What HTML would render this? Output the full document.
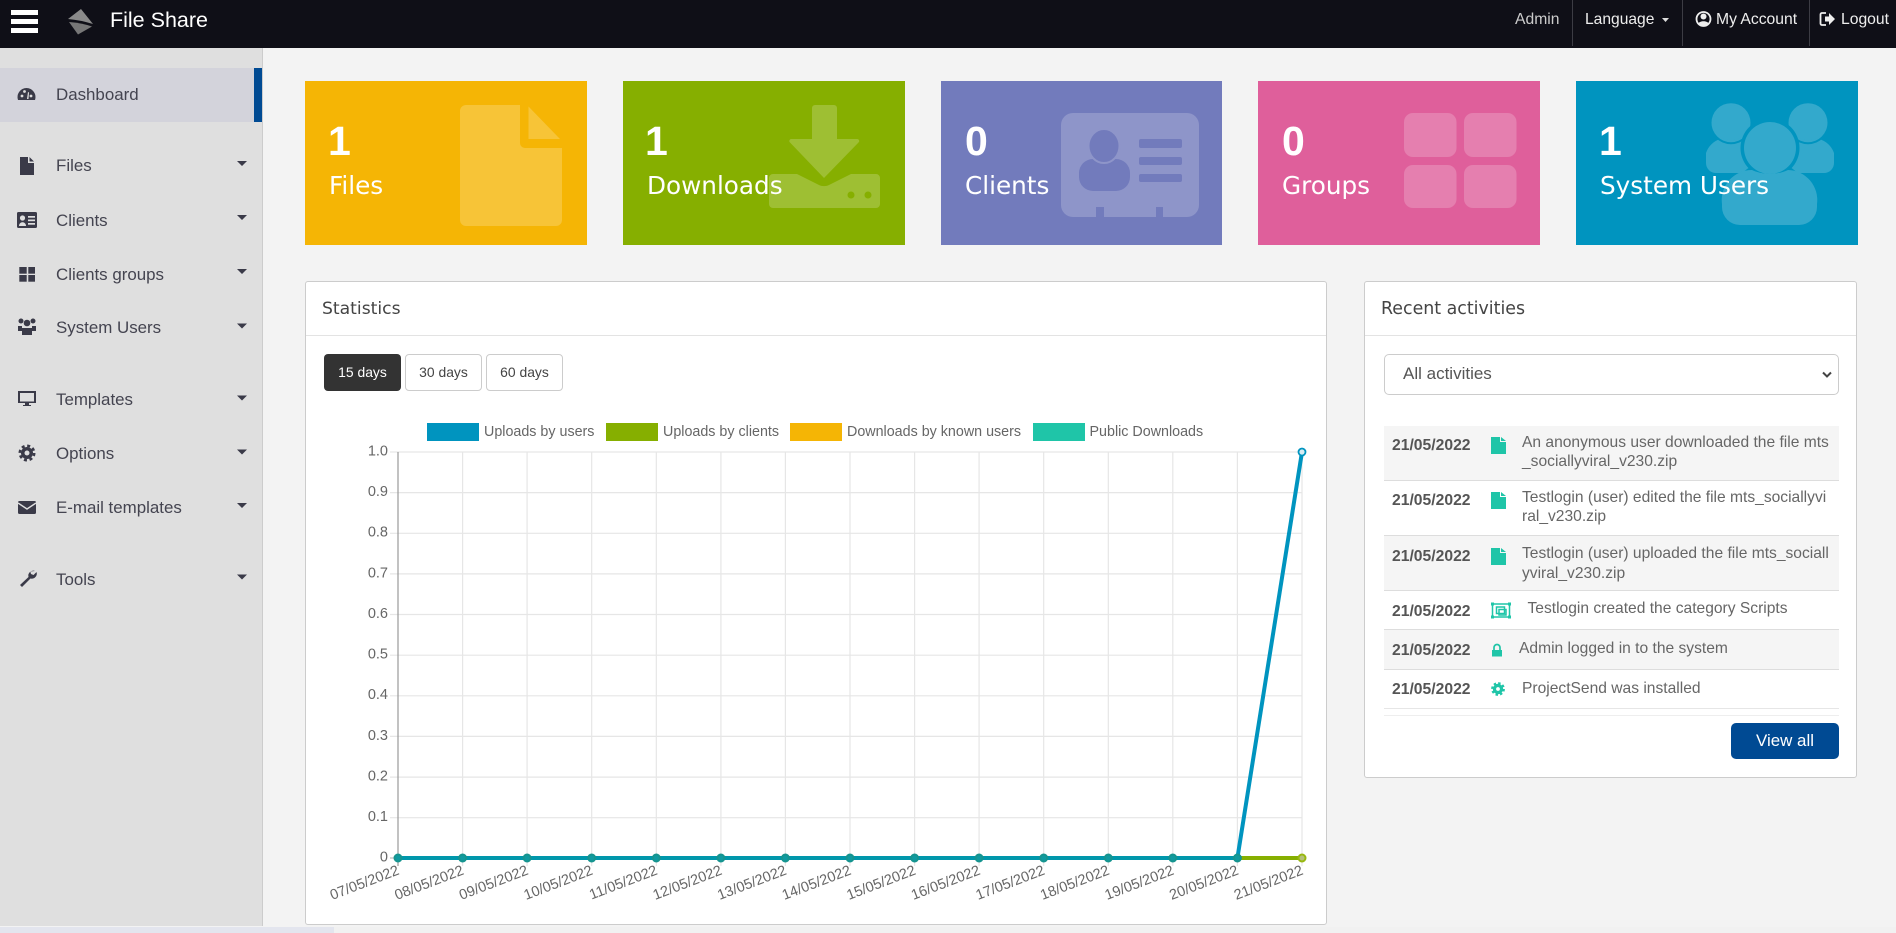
<!DOCTYPE html>
<html><head><meta charset="utf-8"><title>File Share</title>
<style>
html,body{margin:0;padding:0;width:1896px;height:933px;overflow:hidden;background:#f3f3f3;font-family:"Liberation Sans",sans-serif;position:relative}
.b{position:absolute;box-sizing:border-box}
.t{position:absolute;white-space:nowrap;line-height:20px}
.s{font-size:16.9px;color:#444450}
.o{font-family:"DejaVu Sans",sans-serif;color:#fff}
.n{font-family:"Liberation Sans",sans-serif;font-size:41px;font-weight:bold;line-height:44px;left:0}
.l{font-size:24.7px;line-height:30px}
.d{font-size:15.7px;font-weight:bold;color:#555}
.a{font-size:15.6px;color:#666;line-height:20px}
.w{font-size:13.9px;color:#fff;text-align:center}
svg{position:absolute;left:0;top:0}
</style></head><body>
<div class="b" style="left:0;top:0;width:1896px;height:48px;background:#0f0f17"></div>
<div class="b" style="left:0;top:48px;width:263px;height:878px;background:#dfdfdf;border-right:1px solid #ccc"></div>
<div class="b" style="left:0;top:68px;width:254px;height:54px;background:#d3d3db"></div>
<div class="b" style="left:254px;top:68px;width:8px;height:54px;background:#004a93"></div>
<div class="b" style="left:0;top:927px;width:1896px;height:6px;background:#f1f1f1"></div>
<div class="b" style="left:0;top:927px;width:334px;height:6px;background:#e3e5ee"></div>

<div class="b" style="left:305px;top:81px;width:282px;height:164px;background:#f5b505"></div>
<div class="b" style="left:623px;top:81px;width:282px;height:164px;background:#86af00"></div>
<div class="b" style="left:941px;top:81px;width:281px;height:164px;background:#727bbc"></div>
<div class="b" style="left:1258px;top:81px;width:282px;height:164px;background:#df5f9b"></div>
<div class="b" style="left:1576px;top:81px;width:282px;height:164px;background:#0094bf"></div>

<div class="b" style="left:305px;top:281px;width:1022px;height:644px;background:#fff;border:1px solid #ccc;border-radius:3px"></div>
<div class="b" style="left:306px;top:335px;width:1020px;height:1px;background:#e3e3e3"></div>
<div class="b" style="left:1364px;top:281px;width:493px;height:497px;background:#fff;border:1px solid #ccc;border-radius:3px"></div>
<div class="b" style="left:1365px;top:335px;width:491px;height:1px;background:#e3e3e3"></div>

<div class="b" style="left:324px;top:354px;width:77px;height:37px;background:#333;border-radius:4px"></div>
<div class="b" style="left:405px;top:354px;width:77px;height:37px;background:#fff;border:1px solid #ccc;border-radius:4px"></div>
<div class="b" style="left:486px;top:354px;width:77px;height:37px;background:#fff;border:1px solid #ccc;border-radius:4px"></div>

<div class="b" style="left:1384px;top:354px;width:455px;height:41px;background:#fff;border:1px solid #ccc;border-radius:5px"></div>

<div class="b" style="left:1384px;top:426px;width:455px;height:55px;background:#f5f5f5;border-bottom:1px solid #ddd"></div>
<div class="b" style="left:1384px;top:481px;width:455px;height:55px;background:#fff;border-bottom:1px solid #ddd"></div>
<div class="b" style="left:1384px;top:536px;width:455px;height:55px;background:#f5f5f5;border-bottom:1px solid #ddd"></div>
<div class="b" style="left:1384px;top:591px;width:455px;height:39px;background:#fff;border-bottom:1px solid #ddd"></div>
<div class="b" style="left:1384px;top:630px;width:455px;height:40px;background:#f5f5f5;border-bottom:1px solid #ddd"></div>
<div class="b" style="left:1384px;top:670px;width:455px;height:39px;background:#fff;border-bottom:1px solid #e6e6e6"></div>
<div class="b" style="left:1384px;top:715px;width:455px;height:1px;background:#eee"></div>
<div class="b" style="left:1731px;top:723px;width:108px;height:36px;background:#004a93;border-radius:5px"></div>

<svg width="1896" height="933" viewBox="0 0 1896 933" xmlns="http://www.w3.org/2000/svg">
<!-- hamburger -->
<rect x="11" y="10" width="27" height="5" fill="#fff"/><rect x="11" y="19" width="27" height="5" fill="#fff"/><rect x="11" y="28" width="27" height="5" fill="#fff"/>
<!-- logo -->
<path d="M81 9L93 24Q80 20 68 19Z" fill="#8a8a8a"/><path d="M69 22Q82 23 92 26.500L78 34.500Z" fill="#777"/>
<!-- top right icons -->
<path d="M1663 18h7l-3.500 4z" fill="#ddd" transform="translate(-1 0)"/>
<rect x="1572" y="0" width="1" height="46" fill="#3c3c44"/><rect x="1682" y="0" width="1" height="46" fill="#3c3c44"/><rect x="1809" y="0" width="1" height="46" fill="#3c3c44"/>
<circle cx="1703.500" cy="19" r="7" fill="none" stroke="#eee" stroke-width="1.800"/><circle cx="1703.500" cy="16.500" r="3" fill="#eee"/><path d="M1698.500 23.500c1-3 9-3 10 0l-2 2h-6z" fill="#eee"/>
<path d="M1826 13h-4a1.500 1.500 0 0 0-1.500 1.500v9a1.500 1.500 0 0 0 1.500 1.500h4" fill="none" stroke="#eee" stroke-width="1.800"/><path d="M1825 16.500h4v-3.500l6 6-6 6v-3.500h-4z" fill="#eee"/>
<!-- sidebar icons -->
<g fill="#3a3a48">
<path d="M18 100a9 9 0 1 1 17 0z"/>
<path d="M20 157h8v6h6v12H20zM29.500 157l4.500 4.500h-4.500z"/>
<rect x="17" y="212" width="20" height="16" rx="1.500"/>
<rect x="19.300" y="267" width="7.400" height="6.700"/><rect x="28.300" y="267" width="6.700" height="6.700"/><rect x="19.300" y="275" width="7.400" height="6.700"/><rect x="28.300" y="275" width="6.700" height="6.700"/>
<circle cx="21" cy="321" r="2.500"/><circle cx="33" cy="321" r="2.500"/><circle cx="27" cy="323" r="3.300"/><path d="M18 326h4v5h-4zM32 326h4v5h-4zM22 328h10v7H22z"/>
<path d="M18 391h18v12h-7v2h2v1H23v-1h2v-2h-7z"/>
<circle cx="27" cy="453" r="6"/><circle cx="27" cy="453" r="7.200" fill="none" stroke="#3a3a48" stroke-width="2.600" stroke-dasharray="3 2.650"/>
<rect x="18" y="501" width="18" height="13" rx="1.500"/>
<path d="M35 571a5 5 0 0 0-6.500 6l-8.500 8 2 2 8.500-8.500a5 5 0 0 0 6-6.500l-3 3-2.500-1-.7-2.500z"/>
</g>
<g fill="#dfdfdf">
<circle cx="22" cy="96" r="1.400"/><circle cx="24.500" cy="91.500" r="1.400"/><circle cx="31" cy="96" r="1.400"/><path d="M27 99l1-7 1 .5-.5 6.500z"/>
<circle cx="22.500" cy="218" r="2.600"/><path d="M19 226c0-5 7-5 7 0z"/><rect x="28" y="216" width="7" height="1.700"/><rect x="28" y="219.500" width="7" height="1.700"/><rect x="28" y="223" width="7" height="1.700"/>
<rect x="20" y="393" width="14" height="8.500"/>
<circle cx="27" cy="453" r="2.500"/>
</g>
<path d="M18 503l9 6 9-6" fill="none" stroke="#dfdfdf" stroke-width="1.400"/>
<g fill="#3a3a48">
<path d="M237 161h10l-5 5zM237 215h10l-5 5zM237 269h10l-5 5zM237 323.500h10l-5 5zM237 395.500h10l-5 5zM237 449.500h10l-5 5zM237 503h10l-5 5zM237 574.500h10l-5 5z"/>
</g>

<!-- card glyphs -->
<path d="M466 105h54v38a5 5 0 0 0 5 5h37v72a6 6 0 0 1-6 6H466a6 6 0 0 1-6-6V111a6 6 0 0 1 6-6z" fill="#f7c437"/>
<path d="M528.500 106.500L560 139h-31.500z" fill="#f7c437"/>
<path d="M815 105h19a3 3 0 0 1 3 3v31h20a2 2 0 0 1 1.500 3.500L824 178l-34-35.500a2 2 0 0 1 1.500-3.500H812v-31a3 3 0 0 1 3-3z" fill="#9ebf33"/>
<path d="M773 174h24l22 11c3 1.500 7 1.500 10 0l22-11h25a4 4 0 0 1 4 4v26a4 4 0 0 1-4 4H773a4 4 0 0 1-4-4v-26a4 4 0 0 1 4-4z" fill="#9ebf33"/>
<circle cx="851" cy="195" r="3.500" fill="#86af00"/><circle cx="868" cy="195" r="3.500" fill="#86af00"/>
<rect x="1061" y="113" width="138" height="104" rx="12" fill="#8e95c9"/>
<g fill="#727bbc"><rect x="1096" y="207" width="8" height="11"/><rect x="1156" y="207" width="7" height="11"/><rect x="1079" y="159" width="51" height="32" rx="14"/><ellipse cx="1104" cy="146" rx="15.500" ry="17" stroke="#8e95c9" stroke-width="2"/><rect x="1139" y="139" width="43" height="9" rx="2"/><rect x="1139" y="157" width="43" height="8" rx="2"/><rect x="1139" y="174" width="43" height="8" rx="2"/></g>
<g fill="#e57faf"><rect x="1404" y="113" width="52.500" height="44" rx="9"/><rect x="1464" y="113" width="52.500" height="44" rx="9"/><rect x="1404" y="165" width="52.500" height="43" rx="9"/><rect x="1464" y="165" width="52.500" height="43" rx="9"/></g>
<g fill="#33a9cc">
<path d="M1720 139h30v34h-34a10 10 0 0 1-10-10v-10a22 22 0 0 1 14-14zM1790 139h29a22 22 0 0 1 15 14v10a10 10 0 0 1-10 10h-34z"/>
<circle cx="1731" cy="122.700" r="19.500" stroke="#0094bf" stroke-width="4" paint-order="stroke"/><circle cx="1808" cy="122.700" r="19.500" stroke="#0094bf" stroke-width="4" paint-order="stroke"/>
</g>
<circle cx="1731" cy="122.700" r="17.500" fill="#33a9cc"/><circle cx="1808" cy="122.700" r="17.500" fill="#33a9cc"/>
<circle cx="1770" cy="148" r="29.500" fill="#0094bf"/><path d="M1735 195a34 34 0 0 1 34-30h3a34 34 0 0 1 33 30z" fill="#0094bf" stroke="#0094bf" stroke-width="6"/>
<g fill="#33a9cc"><circle cx="1770" cy="148" r="26"/><path d="M1752 170c10 5 26 5 36 0a30 30 0 0 1 29 34v3a18 18 0 0 1-18 18h-59a18 18 0 0 1-18-18v-3a30 30 0 0 1 30-34z"/></g>

<!-- chart -->
<g stroke="#e6e6e6" stroke-width="1.200" fill="none">
<path d="M390 452H1302M390 492.600H1302M390 533.300H1302M390 573.900H1302M390 614.500H1302M390 655.200H1302M390 695.800H1302M390 736.400H1302M390 777.100H1302M390 817.700H1302"/>
<path d="M462.600 452V866M527.100 452V866M591.700 452V866M656.300 452V866M720.900 452V866M785.400 452V866M850 452V866M914.600 452V866M979.100 452V866M1043.700 452V866M1108.300 452V866M1172.800 452V866M1237.400 452V866M1302 452V866"/>
<path d="M390 858H398" stroke="#bbb"/>
</g>
<path d="M398 452V866" stroke="#999" stroke-width="1.200"/>
<rect x="427" y="423" width="52" height="18" fill="#0094bf"/><rect x="606" y="423" width="52" height="18" fill="#86af00"/><rect x="790" y="423" width="52" height="18" fill="#f5b505"/><rect x="1033" y="423" width="52" height="18" fill="#1fc5a8"/>
<path d="M1237.400 858L1302 858" stroke="#86af00" stroke-width="4"/>
<path d="M398 858H1237.400" stroke="#0097ab" stroke-width="4"/>
<path d="M1237.400 858L1302 452" stroke="#0094bf" stroke-width="4" fill="none"/>
<g fill="#0f9aa0" stroke="#16948f" stroke-width="2">
<circle cx="398" cy="858" r="3.500"/><circle cx="462.600" cy="858" r="3.500"/><circle cx="527.100" cy="858" r="3.500"/><circle cx="591.700" cy="858" r="3.500"/><circle cx="656.300" cy="858" r="3.500"/><circle cx="720.900" cy="858" r="3.500"/><circle cx="785.400" cy="858" r="3.500"/><circle cx="850" cy="858" r="3.500"/><circle cx="914.600" cy="858" r="3.500"/><circle cx="979.100" cy="858" r="3.500"/><circle cx="1043.700" cy="858" r="3.500"/><circle cx="1108.300" cy="858" r="3.500"/><circle cx="1172.800" cy="858" r="3.500"/><circle cx="1237.400" cy="858" r="3.500"/>
</g>
<circle cx="1302" cy="858" r="3.500" fill="#b5c07c" stroke="#98b810" stroke-width="2"/>
<circle cx="1302" cy="452" r="3.500" fill="#d7ecf3" stroke="#0094bf" stroke-width="1.800"/>
<g font-family="Liberation Sans, sans-serif" font-size="14.5" fill="#666" text-anchor="end">
<text x="388" y="455.500">1.0</text><text x="388" y="496">0.9</text><text x="388" y="536.700">0.8</text><text x="388" y="577.300">0.7</text><text x="388" y="618">0.6</text><text x="388" y="658.600">0.5</text><text x="388" y="699.200">0.4</text><text x="388" y="739.900">0.3</text><text x="388" y="780.500">0.2</text><text x="388" y="821.100">0.1</text><text x="388" y="861.500">0</text>
<text transform="translate(400 874) rotate(-21)">07/05/2022</text>
<text transform="translate(464.600 874) rotate(-21)">08/05/2022</text>
<text transform="translate(529.100 874) rotate(-21)">09/05/2022</text>
<text transform="translate(593.700 874) rotate(-21)">10/05/2022</text>
<text transform="translate(658.300 874) rotate(-21)">11/05/2022</text>
<text transform="translate(722.900 874) rotate(-21)">12/05/2022</text>
<text transform="translate(787.400 874) rotate(-21)">13/05/2022</text>
<text transform="translate(852 874) rotate(-21)">14/05/2022</text>
<text transform="translate(916.600 874) rotate(-21)">15/05/2022</text>
<text transform="translate(981.100 874) rotate(-21)">16/05/2022</text>
<text transform="translate(1045.700 874) rotate(-21)">17/05/2022</text>
<text transform="translate(1110.300 874) rotate(-21)">18/05/2022</text>
<text transform="translate(1174.800 874) rotate(-21)">19/05/2022</text>
<text transform="translate(1239.400 874) rotate(-21)">20/05/2022</text>
<text transform="translate(1304 874) rotate(-21)">21/05/2022</text>
</g>

<!-- activity icons -->
<g fill="#1fc5a8">
<path d="M1491 437h9v5h6v12h-15zM1501 437l5 4h-5z"/>
<path d="M1491 492h9v5h6v12h-15zM1501 492l5 4h-5z"/>
<path d="M1491 548h9v5h6v12h-15zM1501 548l5 4h-5z"/>
<path d="M1492 650h10v6.500h-10z"/>
<circle cx="1498" cy="689" r="5.200"/><circle cx="1498" cy="689" r="5.800" fill="none" stroke="#1fc5a8" stroke-width="2.200" stroke-dasharray="2.400 2.155"/>
</g>
<circle cx="1498" cy="689" r="1.900" fill="#fff"/>
<path d="M1494 650v-2.500a3 3 0 0 1 6 0v2.500" fill="none" stroke="#1fc5a8" stroke-width="1.700"/>
<g fill="none" stroke="#1fc5a8" stroke-width="1.500"><rect x="1492.500" y="604" width="17" height="13"/><rect x="1496.500" y="607" width="8" height="6.500"/><rect x="1499" y="609.500" width="7" height="5.500"/></g>
<g fill="#1fc5a8"><rect x="1491" y="602.500" width="3" height="3"/><rect x="1508" y="602.500" width="3" height="3"/><rect x="1491" y="615.500" width="3" height="3"/><rect x="1508" y="615.500" width="3" height="3"/></g>
<path d="M1823 372.500l4 4 4-4" fill="none" stroke="#444" stroke-width="2"/>
</svg>

<div class="t" style="left:110px;top:10px;font-size:21.500px;color:#fff">File Share</div>
<div class="t" style="left:1515px;top:10px;font-size:15.700px;color:#ccc">Admin</div>
<div class="t" style="left:1585px;top:10px;font-size:15.600px;color:#eee">Language</div>
<div class="t" style="left:1716px;top:10px;font-size:15.700px;color:#eee">My Account</div>
<div class="t" style="left:1841px;top:10px;font-size:15.700px;color:#eee">Logout</div>

<div class="t s" style="left:56px;top:85px">Dashboard</div>
<div class="t s" style="left:56px;top:156px">Files</div>
<div class="t s" style="left:56px;top:211px">Clients</div>
<div class="t s" style="left:56px;top:265px">Clients groups</div>
<div class="t s" style="left:56px;top:318px">System Users</div>
<div class="t s" style="left:56px;top:390px">Templates</div>
<div class="t s" style="left:56px;top:444px">Options</div>
<div class="t s" style="left:56px;top:498px">E-mail templates</div>
<div class="t s" style="left:56px;top:570px">Tools</div>

<div class="t o n" style="left:328px;top:119px">1</div><div class="t o l" style="left:329px;top:171px">Files</div>
<div class="t o n" style="left:645px;top:119px">1</div><div class="t o l" style="left:647px;top:171px">Downloads</div>
<div class="t o n" style="left:965px;top:119px">0</div><div class="t o l" style="left:965px;top:171px">Clients</div>
<div class="t o n" style="left:1282px;top:119px">0</div><div class="t o l" style="left:1282px;top:171px">Groups</div>
<div class="t o n" style="left:1599px;top:119px">1</div><div class="t o l" style="left:1600px;top:171px">System Users</div>

<div class="t" style="left:322px;top:299px;font-family:'DejaVu Sans',sans-serif;font-size:17.200px;color:#444">Statistics</div>
<div class="t" style="left:1381px;top:299px;font-family:'DejaVu Sans',sans-serif;font-size:17.400px;color:#444">Recent activities</div>

<div class="t w" style="left:324px;top:362px;width:77px">15 days</div>
<div class="t w" style="left:405px;top:362px;width:77px;color:#444">30 days</div>
<div class="t w" style="left:486px;top:362px;width:77px;color:#444">60 days</div>

<div class="t" style="left:484px;top:422px;font-size:14.300px;color:#666">Uploads by users</div>
<div class="t" style="left:663px;top:422px;font-size:14.300px;color:#666">Uploads by clients</div>
<div class="t" style="left:847px;top:422px;font-size:14.300px;color:#666">Downloads by known users</div>
<div class="t" style="left:1089.500px;top:422px;font-size:14.300px;color:#666">Public Downloads</div>

<div class="t" style="left:1403px;top:364px;font-size:17px;color:#555">All activities</div>

<div class="t d" style="left:1392px;top:436px">21/05/2022</div>
<div class="t a" style="left:1522px;top:433px">An anonymous user downloaded the file mts</div>
<div class="t a" style="left:1522px;top:452px">_sociallyviral_v230.zip</div>
<div class="t d" style="left:1392px;top:491px">21/05/2022</div>
<div class="t a" style="left:1522px;top:488px">Testlogin (user) edited the file mts_sociallyvi</div>
<div class="t a" style="left:1522px;top:507px">ral_v230.zip</div>
<div class="t d" style="left:1392px;top:547px">21/05/2022</div>
<div class="t a" style="left:1522px;top:544px">Testlogin (user) uploaded the file mts_sociall</div>
<div class="t a" style="left:1522px;top:564px">yviral_v230.zip</div>
<div class="t d" style="left:1392px;top:602px">21/05/2022</div>
<div class="t a" style="left:1527.500px;top:599px">Testlogin created the category Scripts</div>
<div class="t d" style="left:1392px;top:641px">21/05/2022</div>
<div class="t a" style="left:1519px;top:639px">Admin logged in to the system</div>
<div class="t d" style="left:1392px;top:680px">21/05/2022</div>
<div class="t a" style="left:1522px;top:679px">ProjectSend was installed</div>

<div class="t" style="left:1731px;top:731px;width:108px;text-align:center;font-size:16.900px;color:#fff">View all</div>
</body></html>
